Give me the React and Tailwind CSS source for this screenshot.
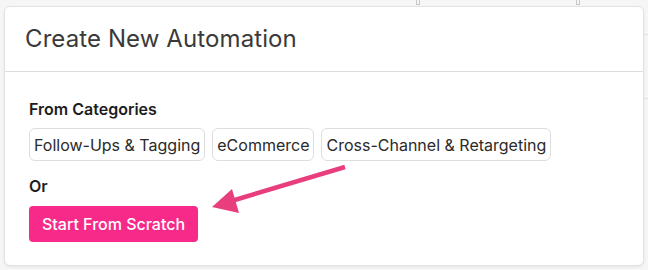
export default function App() {
  return (
    <div className="relative w-[648px] h-[270px] bg-[#f6f6f6] overflow-hidden" style={{ fontFamily: "Inter, 'Noto Sans', sans-serif" }}>
      <div className="absolute left-[416px] top-0 w-[4px] h-[5px] border-x border-b border-[#c8c8c8]" />
      <div className="absolute left-[576px] top-0 w-[4px] h-[5px] border-x border-b border-[#c8c8c8]" />
      <div className="absolute left-[645px] top-[34px] w-[3px] h-px bg-[#e0e0e0]" />
      <div className="absolute left-[645px] top-[98px] w-[3px] h-px bg-[#e0e0e0]" />
      <div className="absolute left-[4px] top-[6px] w-[640px] h-[260px] bg-white rounded-[6px] border border-[#e3e3e3] shadow-[0_1px_3px_rgba(0,0,0,0.08)] flex flex-col">
        <div className="h-[65px] border-b border-[#dcdcdc] flex items-center pl-[20px]">
          <h1 className="text-[24px] text-[#3a3a3a] font-normal tracking-[0.1px]">Create New Automation</h1>
        </div>
        <div className="pl-[24px] pt-[27px] flex flex-col">
          <div className="text-[16px] font-semibold text-[#1d1d1d] leading-[20px]">From Categories</div>
          <div className="flex gap-[7px] mt-[9px]">
            {["Follow-Ups & Tagging", "eCommerce", "Cross-Channel & Retargeting"].map((t) => (
              <div key={t} className="h-[33px] px-[4px] flex items-center border border-[#dedede] rounded-[6px] text-[16px] text-[#2a2a2a]">
                {t}
              </div>
            ))}
          </div>
          <div className="text-[16px] font-semibold text-[#1d1d1d] leading-[20px] mt-[15px]">Or</div>
          <button className="mt-[10px] self-start h-[36px] px-[13px] rounded-[4px] bg-[#f72a8a] text-white text-[16px] font-medium">
            Start From Scratch
          </button>
        </div>
      </div>
      <svg className="absolute left-0 top-0" width="648" height="270" viewBox="0 0 648 270">
        <line x1="345" y1="167" x2="228" y2="202" stroke="#e83e7e" strokeWidth="4.5" />
        <polygon points="212,207 232,189 239,213" fill="#e83e7e" />
      </svg>
    </div>
  );
}
